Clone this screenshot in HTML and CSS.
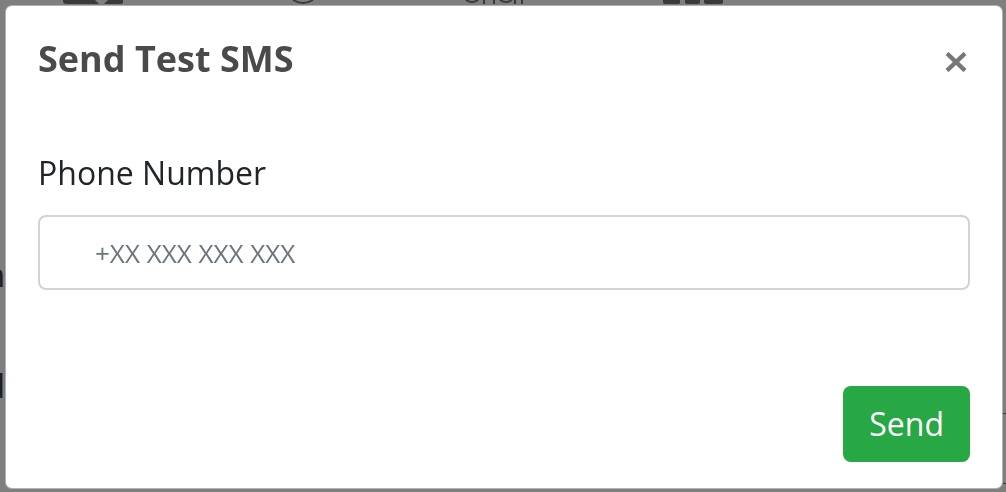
FILE: index.html
```html
<!DOCTYPE html>
<html lang="en">
<head>
<meta charset="utf-8">
<title>Send Test SMS</title>
<link rel="stylesheet" href="styles.css">
</head>
<body>
<div class="page">
  <svg class="nav-peek" width="1006" height="6" viewBox="0 0 1006 6" aria-hidden="true">
    <g fill="#747474">
      <path d="M63 0 H95 L99 4 H67 Q63 4 63 1 Z"/>
      <path d="M104 4 L108 0 H123 V2 Q123 4 120 4 Z"/>
      <path d="M680 0 V3 Q680 4 678 4 H665 Q663 4 663 2 V0 Z"/>
      <path d="M685 0 H700 V2 Q700 4 697 4 H688 Q685 4 685 2 Z"/>
      <path d="M704 0 H723 V2 Q723 4 720 4 H707 Q704 4 704 2 Z"/>
    </g>
    <g fill="none" stroke="#747474" stroke-width="2">
      <path d="M293 0 Q303 6 313 0"/>
      <path d="M466 0 Q472 4 478 0"/>
      <path d="M484 0 V4 M494 0 V4"/>
      <path d="M500 0 Q506 4 512 0"/>
      <path d="M515 0 V4 M522 0 V4"/>
    </g>
  </svg>
  <div class="page-body">
    <div class="edge-left">
      <p class="edge-line first"><span>Description</span></p>
      <p class="edge-line second"><span>Send</span></p>
    </div>
    <div class="page-main"></div>
    <div class="edge-right">
      <div class="edge-row top"></div>
      <div class="edge-row bottom"></div>
    </div>
  </div>
</div>

<div class="backdrop">
  <div class="modal" role="dialog" aria-labelledby="modal-title">
    <div class="modal-header">
      <h5 class="modal-title" id="modal-title">Send Test SMS</h5>
      <button class="close" type="button" aria-label="Close">
        <svg width="22" height="20" viewBox="0 0 22 20" aria-hidden="true">
          <path d="M2 1.5 L20 18.5 M20 1.5 L2 18.5" stroke="#777" stroke-width="4.4" fill="none"/>
        </svg>
      </button>
    </div>
    <div class="modal-body">
      <label class="field-label" for="phone">Phone Number</label>
      <input class="field-input" id="phone" type="tel" placeholder="+XX XXX XXX XXX">
    </div>
    <div class="modal-footer">
      <button class="btn-send" type="button">Send</button>
    </div>
  </div>
</div>
</body>
</html>
```

FILE: styles.css
```css
* {
  box-sizing: border-box;
}

html,
body {
  margin: 0;
  padding: 0;
}

body {
  font-family: "Open Sans", "Noto Sans", sans-serif;
  background: #ffffff;
  overflow: hidden;
}

/* ---------- page behind the dialog ---------- */
.page {
  height: 492px;
  background: #ffffff;
  overflow: hidden;
}

.nav-peek {
  display: block;
}

.page-body {
  display: flex;
  height: 486px;
}

.edge-left {
  width: 5px;
  overflow: hidden;
  padding-top: 245px;
}

.edge-line {
  display: flex;
  justify-content: flex-end;
  margin: 0;
  font-size: 32px;
  line-height: 48px;
  color: #3c3c3c;
  white-space: nowrap;
}

.edge-line.second {
  margin-top: 63px;
}

.page-main {
  flex: 1;
}

.edge-right {
  width: 3px;
}

.edge-row {
  border-bottom: 1px solid #6a6a6a;
}

.edge-row.top {
  height: 408px;
}

.edge-row.bottom {
  height: 70px;
}

/* ---------- backdrop + dialog ---------- */
.backdrop {
  position: fixed;
  inset: 0;
  background: rgba(0, 0, 0, 0.5);
  padding: 5px 0 0 5px;
}

.modal {
  width: 998px;
  background: #ffffff;
  border: 1px solid rgba(0, 0, 0, 0.3);
  border-radius: 7px;
}

.modal-header {
  display: flex;
  justify-content: space-between;
  align-items: flex-start;
  padding: 31px 32px 32px 32px;
}

.modal-title {
  margin: 0;
  font-size: 36px;
  line-height: 44px;
  font-weight: 700;
  color: #4a4a4a;
}

.close {
  margin: 15px 3px 0 0;
  padding: 0;
  border: 0;
  background: transparent;
  line-height: 0;
  cursor: pointer;
}

.modal-body {
  padding: 36px 32px 32px 32px;
}

.field-label {
  display: block;
  margin-bottom: 18px;
  font-size: 32px;
  line-height: 48px;
  color: #212529;
}

.field-input {
  display: block;
  width: 100%;
  height: 75px;
  margin: 0 0 32px 0;
  padding: 0 0 0 55px;
  border: 2px solid #ced4da;
  border-radius: 8px;
  font-family: "Open Sans", "Noto Sans", sans-serif;
  font-size: 26px;
  font-weight: 400;
  color: #495057;
  background: #ffffff;
  outline: none;
}

.field-input::placeholder {
  color: #6c757d;
  opacity: 1;
}

.modal-footer {
  display: flex;
  justify-content: flex-end;
  padding: 32px 32px 26px 32px;
}

.btn-send {
  height: 76px;
  padding: 0 26px;
  border: 0;
  border-radius: 8px;
  background: #28a745;
  color: #ffffff;
  font-family: "Open Sans", "Noto Sans", sans-serif;
  font-size: 32px;
  line-height: 1;
  cursor: pointer;
}
```
